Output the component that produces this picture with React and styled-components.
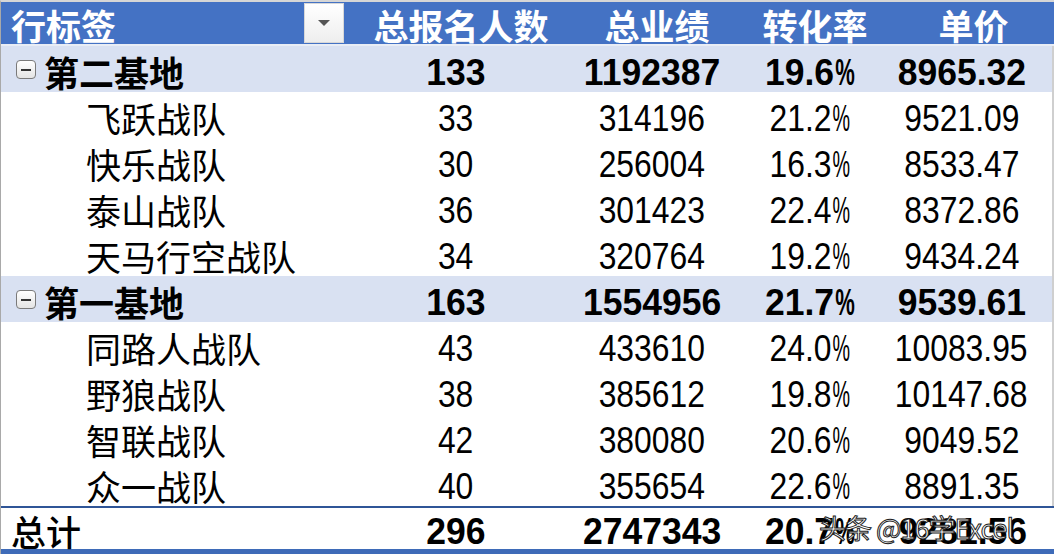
import React from "react";
import styled, { createGlobalStyle } from "styled-components";

const GlobalStyle = createGlobalStyle`
  html, body {
    margin: 0;
    padding: 0;
    background: #ffffff;
  }
  body {
    font-family: "Noto Sans CJK SC", "Liberation Sans", sans-serif;
  }
`;

const groups = [
  {
    name: "第二基地",
    total: ["133", "1192387", "19.6%", "8965.32"],
    teams: [
      ["飞跃战队", "33", "314196", "21.2%", "9521.09"],
      ["快乐战队", "30", "256004", "16.3%", "8533.47"],
      ["泰山战队", "36", "301423", "22.4%", "8372.86"],
      ["天马行空战队", "34", "320764", "19.2%", "9434.24"],
    ],
  },
  {
    name: "第一基地",
    total: ["163", "1554956", "21.7%", "9539.61"],
    teams: [
      ["同路人战队", "43", "433610", "24.0%", "10083.95"],
      ["野狼战队", "38", "385612", "19.8%", "10147.68"],
      ["智联战队", "42", "380080", "20.6%", "9049.52"],
      ["众一战队", "40", "355654", "22.6%", "8891.35"],
    ],
  },
];

const headers = ["总报名人数", "总业绩", "转化率", "单价"];

// numbers keep Excel's narrow percent sign
function Value({ v, bold }) {
  const pct = v.endsWith("%");
  return (
    <Num $bold={bold}>
      {pct ? v.slice(0, -1) : v}
      {pct && <Pct>%</Pct>}
    </Num>
  );
}

export default function App() {
  return (
    <>
      <GlobalStyle />
      <Sheet>
        <HeaderRow>
          <LabelCell $indent={10}>
            <HeaderLabel>行标签</HeaderLabel>
            <FilterButton>
              <Caret />
            </FilterButton>
          </LabelCell>
          {headers.map((h) => (
            <HeaderCell key={h}>{h}</HeaderCell>
          ))}
        </HeaderRow>

        {groups.map((g) => (
          <React.Fragment key={g.name}>
            <Row $variant="group">
              <LabelCell $indent={15}>
                <Toggle>
                  <ToggleBar />
                </Toggle>
                <RowLabel $weight={700}>{g.name}</RowLabel>
              </LabelCell>
              {g.total.map((v, i) => (
                <NumCell key={i} $last={i === 3}>
                  <Value v={v} bold />
                </NumCell>
              ))}
            </Row>
            {g.teams.map((t) => (
              <Row key={t[0]}>
                <LabelCell $indent={85}>
                  <RowLabel $weight={400}>{t[0]}</RowLabel>
                </LabelCell>
                {t.slice(1).map((v, i) => (
                  <NumCell key={i} $last={i === 3}>
                    <Value v={v} />
                  </NumCell>
                ))}
              </Row>
            ))}
          </React.Fragment>
        ))}

        <Row $variant="total">
          <LabelCell $indent={10}>
            <RowLabel $weight={500}>总计</RowLabel>
          </LabelCell>
          {["296", "2747343", "20.7%", "9281.56"].map((v, i) => (
            <NumCell key={i} $last={i === 3}>
              <Value v={v} bold />
            </NumCell>
          ))}
          <Watermark>头条 @16学Excel</Watermark>
        </Row>
      </Sheet>
    </>
  );
}

const Sheet = styled.div`
  width: 1054px;
  height: 554px;
  overflow: hidden;
  border-left: 1px solid #a9a9a9;
  box-sizing: border-box;
  border-top: 2px solid #d6d6d6;
`;

const grid = `
  display: grid;
  grid-template-columns: 344px 222px 170px 146px 1fr;
  grid-template-rows: 100%;
  align-items: center;
`;

const HeaderRow = styled.div`
  ${grid}
  height: 42px;
  background: #4472c4;
  border-bottom: 2px solid #e9edf5;
  color: #ffffff;
`;

const HeaderLabel = styled.span`
  font-size: 35px;
  font-weight: 700;
  line-height: 38px;
  padding-top: 4px;
  flex: 1;
`;

const HeaderCell = styled.div`
  text-align: center;
  font-size: 35px;
  font-weight: 700;
  line-height: 38px;
  padding-top: 4px;
  padding-left: 10px;
  white-space: nowrap;
`;

const FilterButton = styled.div`
  width: 40px;
  height: 40px;
  margin-right: 1px;
  background: linear-gradient(#ffffff, #eeeeee);
  border: 1px solid #d8d8d8;
  box-sizing: border-box;
  display: flex;
  align-items: center;
  justify-content: center;
`;

const Caret = styled.div`
  width: 0;
  height: 0;
  border-left: 6px solid transparent;
  border-right: 6px solid transparent;
  border-top: 6px solid #555555;
`;

const Row = styled.div`
  ${grid}
  position: relative;
  height: ${(p) => (p.$variant === "total" ? "41px" : "46px")};
  background: ${(p) => (p.$variant === "group" ? "#d9e1f2" : "#ffffff")};
  border-right: ${(p) => (p.$variant === "total" ? "none" : "2px solid #cfcfcf")};
  border-top: ${(p) => (p.$variant === "total" ? "2px solid #2f5597" : "none")};
  border-bottom: ${(p) => (p.$variant === "total" ? "5px solid #3e6bb8" : "none")};
  color: #000000;
`;

const LabelCell = styled.div`
  display: flex;
  align-items: center;
  height: 100%;
  padding-left: ${(p) => p.$indent}px;
  box-sizing: border-box;
  white-space: nowrap;
`;

const Toggle = styled.div`
  width: 20px;
  height: 19px;
  box-sizing: border-box;
  border: 1px solid #7a7a7a;
  border-radius: 4px;
  background: linear-gradient(#ffffff, #e4e4e4);
  display: flex;
  align-items: center;
  justify-content: center;
  margin-right: 8px;
  margin-top: 1px;
`;

const ToggleBar = styled.div`
  width: 10px;
  height: 2px;
  background: #333333;
`;

const RowLabel = styled.span`
  font-size: 35px;
  font-weight: ${(p) => p.$weight};
  line-height: 40px;
  padding-top: 5px;
`;

const NumCell = styled.div`
  text-align: center;
  white-space: nowrap;
  line-height: 34px;
  padding-top: 12px;
  padding-right: ${(p) => (p.$last ? "12px" : "0")};
`;

const Num = styled.span`
  display: inline-block;
  font-family: "Liberation Sans", Arial, sans-serif;
  font-size: 37px;
  line-height: 34px;
  font-weight: ${(p) => (p.$bold ? 700 : 400)};
  transform: scaleX(${(p) => (p.$bold ? 0.96 : 0.86)});
`;

const Pct = styled.span`
  display: inline-block;
  transform: scaleX(0.62);
  margin: 0 -6px 0 -5px;
`;

const Watermark = styled.div`
  position: absolute;
  left: 818px;
  top: 2px;
  font-size: 27px;
  line-height: 36px;
  font-family: "Noto Sans CJK SC", "Liberation Sans", sans-serif;
  color: #ffffff;
  white-space: nowrap;
  -webkit-text-stroke: 1px #222222;
  letter-spacing: -1px;
`;
